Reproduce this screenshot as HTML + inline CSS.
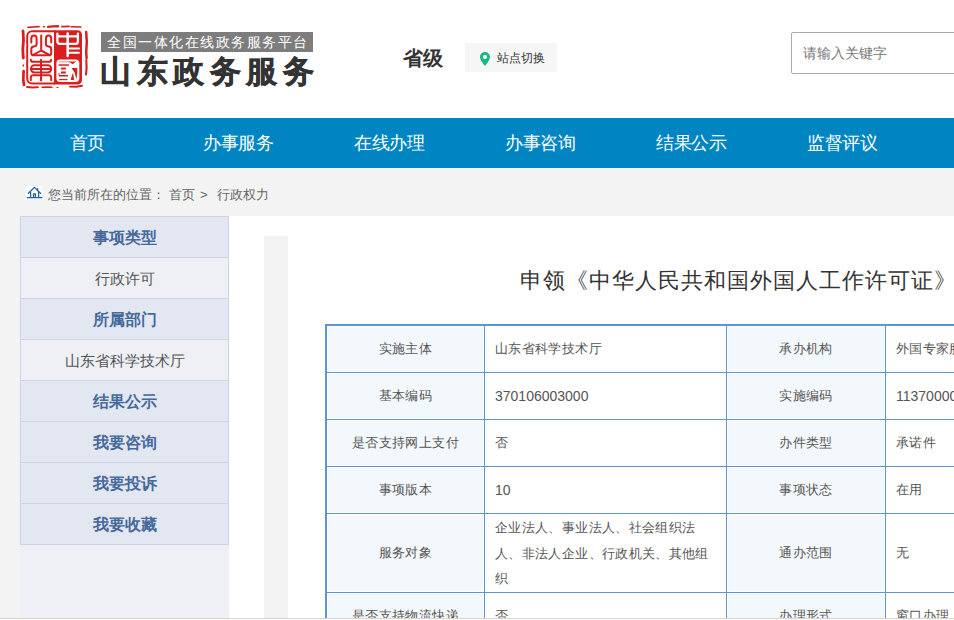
<!DOCTYPE html>
<html><head><meta charset="utf-8">
<style>
*{margin:0;padding:0;box-sizing:border-box}
html,body{width:954px;height:620px;overflow:hidden;background:#fff;font-family:"Liberation Sans",sans-serif;color:#555}
body{position:relative}
.a{position:absolute;white-space:nowrap}
#slogan{left:101px;top:32px;width:212px;height:20px;background:#7d7d7d;color:#fff;font-size:14px;line-height:20px;padding-left:6px;letter-spacing:1.5px}
#brand{left:100px;top:52px;font-size:31px;line-height:40px;font-weight:bold;color:#333;letter-spacing:5.5px;-webkit-text-stroke:0.5px #333}
#level{left:403px;top:44px;font-size:20px;line-height:28px;font-weight:bold;color:#333}
#switch{left:465px;top:43px;width:92px;height:29px;background:#f6f6f6;font-size:12px;line-height:29px;color:#333;padding-left:32px;padding-top:1px}
#switch svg{position:absolute;left:15px;top:9px}
#search{left:791px;top:32px;width:300px;height:42px;border:1px solid #aaa;border-radius:2px;font-size:14px;line-height:40px;color:#777;padding-left:11px}
#nav{left:0;top:118px;width:954px;height:50px;background:#0085c3}
#nav div{position:absolute;top:0;width:151px;text-align:center;color:#fff;font-size:18px;letter-spacing:-0.4px;line-height:50px}
#main{left:0;top:168px;width:954px;height:452px;background:#f3f3f3}
#crumb{left:48px;top:186px;font-size:13px;line-height:18px;color:#666}
#side{left:20px;top:216px;width:209px;height:404px;background:#eff0f6}
.srow{height:41px;border:1px solid #cdd3e3;border-top:none;text-align:center;line-height:40px;padding-top:1px}
.srow.h{background:#e2e7f2;color:#46699c;font-weight:bold;font-size:16px}
.srow.s{background:#eef0f6;color:#555;font-size:15px}
.srow.first{border-top:1px solid #cdd3e3;height:42px}
#content{left:229px;top:216px;width:725px;height:404px;background:#fff}
#strip{left:264px;top:236px;width:24px;height:400px;background:#f3f3f3}
#title{left:520px;top:266px;font-size:22px;line-height:30px;color:#333;letter-spacing:1px}
.ln{position:absolute;background:#5e95cf}
.bg{position:absolute;background:#f3f8fd}
.c{position:absolute;font-size:13px;letter-spacing:0.36px;color:#555;display:flex;align-items:center;white-space:nowrap}
.c.ctr{justify-content:center}
#bottomline{left:0;top:618px;width:954px;height:1px;background:#d9d4cc}
#bottomw{left:0;top:619px;width:954px;height:1px;background:#fff}
</style></head><body>
<!-- logo seal -->
<svg class="a" style="left:18px;top:22px" width="72" height="70" viewBox="18 22 72 70">
  <g fill="none" stroke="#d81e1e" stroke-linecap="round">
    <path d="M28 27.4 L33 27 L39 26.7" stroke-width="1.7"/>
    <path d="M43.5 26.8 L44.5 26.8" stroke-width="1.5"/>
    <path d="M48 26.9 L53 26.4 L58 26.2" stroke-width="2.4"/>
    <path d="M62 26.6 L69 26.4" stroke-width="1.8"/>
    <path d="M71 26.8 L81 27" stroke-width="1.5"/>
    <path d="M23 31 L23.5 40 L22.8 50 L23.3 58" stroke-width="2.8"/>
    <path d="M23.2 65 L23.3 66" stroke-width="1.4"/>
    <path d="M23.6 71 L23.3 80 L24 85" stroke-width="2.7"/>
    <path d="M86.2 32 L86.8 42 L86.2 52 L86.6 58" stroke-width="2.5"/>
    <path d="M86.3 60 L86.6 68 L86 74.5" stroke-width="2.1"/>
    <path d="M27 87 L33 87.5 L38 87.2" stroke-width="1.8"/>
    <path d="M42 87.3 L47 87 L52 87.3" stroke-width="1.4"/>
    <path d="M57 87.3 L58 87.3" stroke-width="1.2"/>
    <path d="M70 86.6 L76 86.8 L82 85.8" stroke-width="1.9"/>
  </g>
  <path d="M54 30.2 H77.5 A4.5 4.5 0 0 1 82 34.7 V80 A4.5 4.5 0 0 1 77.5 84.5 H54 Z" fill="#d81e1e"/>
  <path d="M55 31.2 H32 A5 5 0 0 0 27.2 36.2 V78.5 A5 5 0 0 0 32 83.5 H55" fill="none" stroke="#d81e1e" stroke-width="2"/>
  <!-- shan -->
  <g fill="none" stroke="#d81e1e" stroke-width="2" stroke-linecap="round" stroke-linejoin="round">
    <path d="M41.2 35.6 V50.5 L32.8 55.2 M41.2 50.5 L49.8 55.2"/>
    <path d="M31.3 42.5 V38.4 Q31.3 35.6 34 35.6 Q36.6 35.6 36.6 38.4 V44 Q36.6 46.2 34 46.4 Q31.3 46.6 31.3 49 V53 Q31.3 55.3 33.5 55.3 H49 Q51.2 55.3 51.2 53 V49 Q51.2 46.6 48.5 46.4 Q45.9 46.2 45.9 44 V38.4 Q45.9 35.6 48.5 35.6 Q51.2 35.6 51.2 38.4 V42.5"/>
  </g>
  <!-- dong -->
  <g fill="none" stroke="#d81e1e" stroke-width="2" stroke-linecap="round" stroke-linejoin="round">
    <path d="M41 59.8 V80.4"/>
    <path d="M30.8 59.8 Q31 61.8 33 61.8 H49 Q51 61.8 51.2 59.8"/>
    <rect x="31" y="65.3" width="20.2" height="7.2" rx="3.4"/>
    <path d="M32 68.9 H50"/>
    <path d="M30.8 80.2 V77.3 Q31 75.3 33 75.3 H49 Q51 75.3 51.2 77.3 V80.2"/>
  </g>
  <!-- zhong -->
  <g fill="none" stroke="#fff" stroke-linecap="round" stroke-linejoin="round">
    <path d="M57.4 33.6 V41.5 Q57.4 43.8 59.7 43.8 H75.6 Q77.9 43.8 77.9 41.5 V33.6" stroke-width="2.3"/>
    <path d="M57.4 36.4 H77.9" stroke-width="2.3"/>
    <path d="M67.7 33.6 V56" stroke-width="2.5"/>
    <path d="M68 48.6 H79 M68 52.7 H79" stroke-width="2"/>
  </g>
  <!-- guo -->
  <rect x="56.4" y="59.4" width="22.9" height="22.6" rx="3.8" fill="#fff"/>
  <g fill="#d81e1e" stroke="none">
    <rect x="58.6" y="61.3" width="11" height="1" opacity="0.5"/>
    <rect x="58.6" y="64.3" width="10.4" height="1.5"/>
    <rect x="60.8" y="67.6" width="5.1" height="1.9"/>
    <rect x="60.8" y="71.5" width="5.1" height="2"/>
    <path d="M58.4 73 L59.4 73 L59.6 75 L68 75 L68 76.6 L58.8 76.6 Z"/>
    <rect x="59.2" y="79" width="8.3" height="1.2"/>
    <path d="M68.5 61.4 L76.2 61.4 L72.6 64.3 Z"/>
    <path d="M71.6 67.9 L77.3 67.9 L77.3 73 L76.4 79.5 L74.8 73 Z"/>
    <path d="M70.6 80 L73 72.5 L74.2 80 Z"/>
  </g>
</svg>
<div class="a" id="slogan">全国一体化在线政务服务平台</div>
<div class="a" id="brand">山东政务服务</div>
<div class="a" id="level">省级</div>
<div class="a" id="switch"><svg width="10" height="14" viewBox="0 0 10 14"><path d="M5 0C2.2 0 0 2.2 0 5 0 8.3 5 14 5 14S10 8.3 10 5C10 2.2 7.8 0 5 0zm0 7a2.1 2.1 0 1 1 0-4.2 2.1 2.1 0 0 1 0 4.2z" fill="#17b884"/></svg>站点切换</div>
<div class="a" id="search">请输入关键字</div>
<div class="a" id="nav">
  <div style="left:12px">首页</div>
  <div style="left:163px">办事服务</div>
  <div style="left:314px">在线办理</div>
  <div style="left:465px">办事咨询</div>
  <div style="left:616px">结果公示</div>
  <div style="left:767px">监督评议</div>
</div>
<div class="a" id="main"></div>
<svg class="a" style="left:24px;top:184px" width="22" height="18" viewBox="24 184 22 18"><rect x="26" y="186" width="16.5" height="13" fill="#fbfbfb"/><g fill="none" stroke="#22609f" stroke-width="1.25" stroke-linecap="round" stroke-linejoin="round"><path d="M28.4 193.3 L34.4 187.4 L40.5 193.3"/><path d="M37.6 188.6 V190.6"/><path d="M30.6 192.2 V197.2 M38.6 192.2 V197.2"/><path d="M33.5 197.2 V193.8 H35.4 V197.2"/><path d="M27.2 197.6 H41.8"/></g></svg>
<div class="a" id="crumb">您当前所在的位置：<span style="margin-left:4px">首页</span><span style="margin-left:5px">&gt;</span><span style="margin-left:9px">行政权力</span></div>
<div class="a" id="side">
  <div class="srow h first">事项类型</div>
  <div class="srow s">行政许可</div>
  <div class="srow h">所属部门</div>
  <div class="srow s">山东省科学技术厅</div>
  <div class="srow h">结果公示</div>
  <div class="srow h">我要咨询</div>
  <div class="srow h">我要投诉</div>
  <div class="srow h">我要收藏</div>
</div>
<div class="a" id="content"></div>
<div class="a" id="strip"></div>
<div class="a" id="title">申领《中华人民共和国外国人工作许可证》</div>
<!-- table backgrounds -->
<div class="bg" style="left:328px;top:327px;width:155px;height:44px"></div>
<div class="bg" style="left:728px;top:327px;width:156px;height:44px"></div>
<div class="bg" style="left:328px;top:374px;width:155px;height:44px"></div>
<div class="bg" style="left:728px;top:374px;width:156px;height:44px"></div>
<div class="bg" style="left:328px;top:421px;width:155px;height:44px"></div>
<div class="bg" style="left:728px;top:421px;width:156px;height:44px"></div>
<div class="bg" style="left:328px;top:468px;width:155px;height:44px"></div>
<div class="bg" style="left:728px;top:468px;width:156px;height:44px"></div>
<div class="bg" style="left:328px;top:515px;width:155px;height:76px"></div>
<div class="bg" style="left:728px;top:515px;width:156px;height:76px"></div>
<div class="bg" style="left:328px;top:594px;width:155px;height:30px"></div>
<div class="bg" style="left:728px;top:594px;width:156px;height:30px"></div>
<!-- table lines -->
<div class="ln" style="left:325px;top:324px;width:629px;height:2px"></div>
<div class="ln" style="left:325px;top:324px;width:2px;height:300px"></div>
<div class="ln" style="left:484px;top:324px;width:1px;height:300px"></div>
<div class="ln" style="left:726px;top:324px;width:1px;height:300px"></div>
<div class="ln" style="left:885px;top:324px;width:1px;height:300px"></div>
<div class="ln" style="left:325px;top:372px;width:629px;height:1px"></div>
<div class="ln" style="left:325px;top:419px;width:629px;height:1px"></div>
<div class="ln" style="left:325px;top:466px;width:629px;height:1px"></div>
<div class="ln" style="left:325px;top:513px;width:629px;height:1px"></div>
<div class="ln" style="left:325px;top:592px;width:629px;height:1px"></div>
<!-- table text -->
<div class="c ctr" style="left:327px;top:326px;width:157px;height:46px">实施主体</div>
<div class="c" style="left:495px;top:326px;height:46px">山东省科学技术厅</div>
<div class="c ctr" style="left:727px;top:326px;width:158px;height:46px">承办机构</div>
<div class="c" style="left:896px;top:326px;height:46px">外国专家服务处</div>
<div class="c ctr" style="left:327px;top:373px;width:157px;height:46px">基本编码</div>
<div class="c" style="left:495px;top:373px;height:46px;font-size:14px;letter-spacing:0">370106003000</div>
<div class="c ctr" style="left:727px;top:373px;width:158px;height:46px">实施编码</div>
<div class="c" style="left:896px;top:373px;height:46px;font-size:14px;letter-spacing:0">11370000000000000000</div>
<div class="c ctr" style="left:327px;top:420px;width:157px;height:46px">是否支持网上支付</div>
<div class="c" style="left:495px;top:420px;height:46px">否</div>
<div class="c ctr" style="left:727px;top:420px;width:158px;height:46px">办件类型</div>
<div class="c" style="left:896px;top:420px;height:46px">承诺件</div>
<div class="c ctr" style="left:327px;top:467px;width:157px;height:46px">事项版本</div>
<div class="c" style="left:495px;top:467px;height:46px;font-size:14px;letter-spacing:0">10</div>
<div class="c ctr" style="left:727px;top:467px;width:158px;height:46px">事项状态</div>
<div class="c" style="left:896px;top:467px;height:46px">在用</div>
<div class="c ctr" style="left:327px;top:514px;width:157px;height:78px">服务对象</div>
<div class="a" style="left:495px;top:515px;font-size:13px;letter-spacing:0.36px;color:#555;line-height:25.5px">企业法人、事业法人、社会组织法<br>人、非法人企业、行政机关、其他组<br>织</div>
<div class="c ctr" style="left:727px;top:514px;width:158px;height:78px">通办范围</div>
<div class="c" style="left:896px;top:514px;height:78px">无</div>
<div class="c ctr" style="left:327px;top:593px;width:157px;height:46px">是否支持物流快递</div>
<div class="c" style="left:495px;top:593px;height:46px">否</div>
<div class="c ctr" style="left:727px;top:593px;width:158px;height:46px">办理形式</div>
<div class="c" style="left:896px;top:593px;height:46px">窗口办理</div>
<div class="a" id="bottomline"></div>
<div class="a" id="bottomw"></div>
</body></html>
